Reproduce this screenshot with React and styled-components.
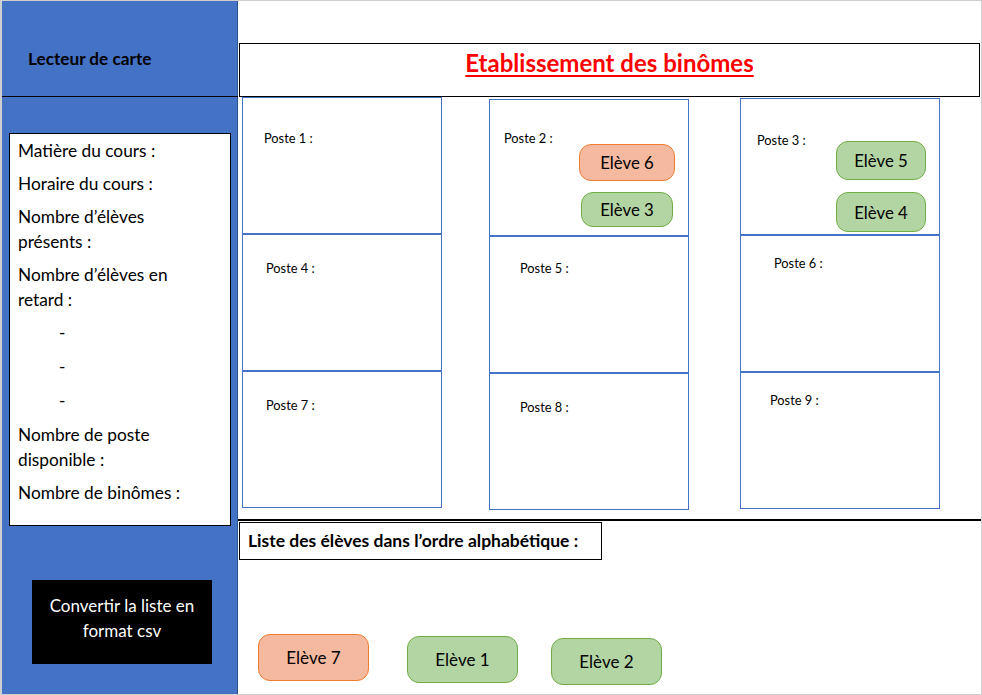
import React from 'react';
import styled, { createGlobalStyle } from 'styled-components';

const GlobalStyle = createGlobalStyle`
  html, body {
    margin: 0;
    padding: 0;
    background: #ffffff;
  }
  * {
    box-sizing: border-box;
  }
`;

const FONT = `Lato, 'Liberation Sans', sans-serif`;
const BLUE = '#4472c4';

// Whole sheet: blue sidebar on the left, poste board on the right
const Sheet = styled.div`
  width: 982px;
  height: 695px;
  border: 1px solid #cfcfcf;
  border-left-width: 2px;
  display: flex;
  font-family: ${FONT};
  color: #000;
  overflow: hidden;
`;

// Sidebar
const Sidebar = styled.aside`
  width: 236px;
  flex-shrink: 0;
  background: ${BLUE};
  border-right: 1px solid #2f528f;
  display: flex;
  flex-direction: column;
  padding-top: 1px;
`;

const SideHeader = styled.div`
  height: 95px;
  border-bottom: 1px solid #000;
  padding: 47px 0 0 26px;
  font-size: 17.2px;
  line-height: 20px;
  font-weight: 700;
  margin-right: -1px;
`;

const InfoBox = styled.div`
  margin: 36px 6px 0 7px;
  height: 393px;
  background: #fff;
  border: 1.5px solid #000;
  padding: 4px 8px;
  font-size: 17.3px;
  line-height: 25px;
`;

const InfoLine = styled.p`
  margin: 0 0 ${({ $dash }) => ($dash ? 9 : 8)}px;
  padding-left: ${({ $dash }) => ($dash ? '41px' : '0')};
  white-space: nowrap;
`;

const ConvertButton = styled.div`
  margin: 54px 0 0 30px;
  width: 180px;
  height: 84px;
  background: #000;
  color: #fff;
  display: flex;
  align-items: center;
  justify-content: center;
  text-align: center;
  font-size: 17px;
  line-height: 25px;
  padding-bottom: 8px;
`;

// Main board
const Main = styled.main`
  flex: 1;
  display: flex;
  flex-direction: column;
  padding-top: 42px;
`;

const TitleBox = styled.div`
  height: 54px;
  margin: 0 1px 0 1px;
  border: 1px solid #000;
  display: flex;
  align-items: center;
  justify-content: center;
  padding-bottom: 14px;
`;

const Title = styled.h1`
  margin: 0;
  color: #ff0000;
  font-size: 24px;
  line-height: 28px;
  font-weight: 700;
  text-decoration: underline;
  text-decoration-thickness: 2px;
  text-underline-offset: 3px;
`;

const Board = styled.div`
  height: 422px;
  display: flex;
  align-items: flex-start;
  padding-left: 4px;
`;

const PosteColumn = styled.div`
  width: 200px;
  margin-top: ${({ $top }) => $top}px;
  margin-left: ${({ $left }) => $left}px;
  display: flex;
  flex-direction: column;
`;

const PosteCell = styled.div`
  height: 137px;
  border: 1px solid ${BLUE};
  display: flex;
  justify-content: space-between;
  align-items: flex-start;
`;

const PosteLabel = styled.span`
  font-size: 12.8px;
  line-height: 14px;
  margin-top: ${({ $y }) => $y}px;
  margin-left: ${({ $x }) => $x}px;
  white-space: nowrap;
`;

const ChipStack = styled.div`
  display: flex;
  flex-direction: column;
  align-items: center;
  gap: ${({ $gap }) => $gap}px;
  margin-top: ${({ $y }) => $y}px;
  margin-right: ${({ $r }) => $r}px;
`;

const Chip = styled.div`
  width: ${({ $w }) => $w}px;
  height: ${({ $h }) => $h}px;
  border-radius: 12px;
  border: 1px solid ${({ $tone }) => ($tone === 'orange' ? '#ed7d31' : '#70ad47')};
  background: ${({ $tone }) => ($tone === 'orange' ? '#f5b9a0' : '#b3d5a4')};
  display: flex;
  align-items: center;
  justify-content: center;
  font-size: ${({ $big }) => ($big ? 17 : 16.8)}px;
  margin-top: ${({ $dy = 0 }) => $dy}px;
  margin-left: ${({ $dx = 0 }) => $dx}px;
  flex-shrink: 0;
`;

const Rule = styled.div`
  height: 2px;
  background: #000;
`;

const ListeBox = styled.div`
  margin: 1px 0 0 1px;
  width: 363px;
  height: 38px;
  border: 1px solid #000;
  display: flex;
  align-items: center;
  padding: 0 0 2px 8px;
  font-size: 17.5px;
  font-weight: 700;
  white-space: nowrap;
`;

const ListeRow = styled.div`
  display: flex;
  align-items: flex-start;
  gap: 38px;
  padding-left: 20px;
  margin-top: 74px;
`;

const columns = [
  {
    top: 0,
    left: 0,
    cells: [
      { n: 1, x: 21, y: 33 },
      { n: 4, x: 23, y: 26 },
      { n: 7, x: 23, y: 26 },
    ],
  },
  {
    top: 2,
    left: 47,
    cells: [
      {
        n: 2,
        x: 14,
        y: 31,
        chips: { y: 44, r: 13, gap: 11, items: [['Elève 6', 'orange', 96, 37], ['Elève 3', 'green', 92, 35]] },
      },
      { n: 5, x: 30, y: 24 },
      { n: 8, x: 30, y: 26 },
    ],
  },
  {
    top: 1,
    left: 51,
    cells: [
      {
        n: 3,
        x: 16,
        y: 34,
        chips: { y: 42, r: 13, gap: 12, items: [['Elève 5', 'green', 90, 39], ['Elève 4', 'green', 90, 40]] },
      },
      { n: 6, x: 33, y: 20 },
      { n: 9, x: 29, y: 20 },
    ],
  },
];

const bottomChips = [
  ['Elève 7', 'orange', 0, 0],
  ['Elève 1', 'green', 2, 0],
  ['Elève 2', 'green', 4, -5],
];

const App = () => (
  <>
    <GlobalStyle />
    <Sheet>
      <Sidebar>
        <SideHeader>Lecteur de carte</SideHeader>
        <InfoBox>
          <InfoLine>Matière du cours :</InfoLine>
          <InfoLine>Horaire du cours :</InfoLine>
          <InfoLine>
            Nombre d’élèves
            <br />
            présents :
          </InfoLine>
          <InfoLine>
            Nombre d’élèves en
            <br />
            retard :
          </InfoLine>
          <InfoLine $dash>-</InfoLine>
          <InfoLine $dash>-</InfoLine>
          <InfoLine $dash>-</InfoLine>
          <InfoLine>
            Nombre de poste
            <br />
            disponible :
          </InfoLine>
          <InfoLine>Nombre de binômes :</InfoLine>
        </InfoBox>
        <ConvertButton>
          Convertir la liste en
          <br />
          format csv
        </ConvertButton>
      </Sidebar>

      <Main>
        <TitleBox>
          <Title>Etablissement des binômes</Title>
        </TitleBox>

        <Board>
          {columns.map((col, i) => (
            <PosteColumn key={i} $top={col.top} $left={col.left}>
              {col.cells.map((cell) => (
                <PosteCell key={cell.n}>
                  <PosteLabel $x={cell.x} $y={cell.y}>
                    Poste {cell.n} :
                  </PosteLabel>
                  {cell.chips && (
                    <ChipStack $y={cell.chips.y} $r={cell.chips.r} $gap={cell.chips.gap}>
                      {cell.chips.items.map(([name, tone, w, h]) => (
                        <Chip key={name} $tone={tone} $w={w} $h={h}>
                          {name}
                        </Chip>
                      ))}
                    </ChipStack>
                  )}
                </PosteCell>
              ))}
            </PosteColumn>
          ))}
        </Board>

        <Rule />
        <ListeBox>Liste des élèves dans l’ordre alphabétique :</ListeBox>

        <ListeRow>
          {bottomChips.map(([name, tone, dy, dx]) => (
            <Chip key={name} $tone={tone} $w={111} $h={47} $dy={dy} $dx={dx} $big>
              {name}
            </Chip>
          ))}
        </ListeRow>
      </Main>
    </Sheet>
  </>
);

export default App;
